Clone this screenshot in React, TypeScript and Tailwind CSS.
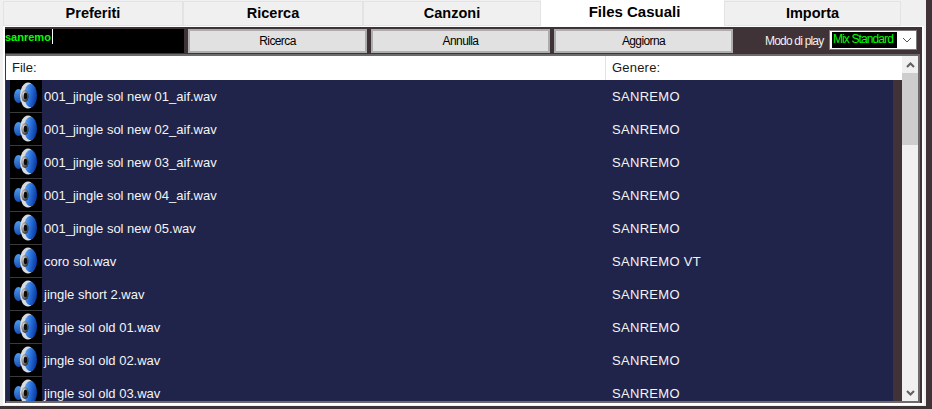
const FONT = "font-['Liberation_Sans',Arial,sans-serif]"

const tabs = [
  { label: 'Preferiti', width: 'w-[180px]' },
  { label: 'Ricerca', width: 'w-[180px]' },
  { label: 'Canzoni', width: 'w-[178px]' },
  { label: 'Files Casuali', width: 'w-[183px]', active: true },
  { label: 'Importa', width: 'w-[177px]' },
]

const rows = [
  ['001_jingle sol new 01_aif.wav', 'SANREMO'],
  ['001_jingle sol new 02_aif.wav', 'SANREMO'],
  ['001_jingle sol new 03_aif.wav', 'SANREMO'],
  ['001_jingle sol new 04_aif.wav', 'SANREMO'],
  ['001_jingle sol new 05.wav', 'SANREMO'],
  ['coro sol.wav', 'SANREMO VT'],
  ['jingle short 2.wav', 'SANREMO'],
  ['jingle sol old 01.wav', 'SANREMO'],
  ['jingle sol old 02.wav', 'SANREMO'],
  ['jingle sol old 03.wav', 'SANREMO'],
]

function SpeakerIcon() {
  return (
    <div className="w-[32px] h-[32px] bg-black shrink-0">
      <svg width="32" height="32" viewBox="0 0 32 32">
        <defs>
          <linearGradient id="cone" x1="0" y1="0" x2="1" y2="0.3">
            <stop offset="0" stopColor="#6db0f5" />
            <stop offset="0.55" stopColor="#2a72dc" />
            <stop offset="1" stopColor="#0c3fa8" />
          </linearGradient>
          <linearGradient id="back" x1="0" y1="0" x2="0" y2="1">
            <stop offset="0" stopColor="#4f9cf0" />
            <stop offset="1" stopColor="#174fb4" />
          </linearGradient>
          <radialGradient id="cap" cx="0.35" cy="0.35" r="0.75">
            <stop offset="0" stopColor="#e8e8e8" />
            <stop offset="0.6" stopColor="#6f6f6f" />
            <stop offset="1" stopColor="#1c1c1c" />
          </radialGradient>
        </defs>
        <ellipse cx="8.5" cy="16" rx="4.5" ry="7" fill="url(#back)" />
        <ellipse cx="18" cy="15.5" rx="8" ry="13" fill="#d8dbe0" />
        <ellipse cx="20.5" cy="15.5" rx="6.5" ry="11.5" fill="url(#cone)" />
        <ellipse cx="15" cy="16" rx="3.6" ry="6" fill="url(#cap)" />
        <ellipse cx="15.5" cy="16" rx="1.8" ry="3.2" fill="#0c0c0c" />
      </svg>
    </div>
  )
}

export default function App() {
  return (
    <div className={`${FONT} w-[932px] h-[409px] overflow-hidden bg-[#3f3338] flex flex-col`}>
      <div className="h-[406px] w-[926px] bg-[#f0f0f0] shrink-0 flex flex-col">
        {/* tabs */}
        <div className="h-[26px] pl-[3px] pt-[1px] flex shrink-0">
          {tabs.map((t) => (
            <div
              key={t.label}
              className={
                t.active
                  ? `${t.width} -mt-[1px] h-[26px] bg-white flex items-center justify-center pb-[2px] pl-[4px] text-[15px] font-bold text-black`
                  : `${t.width} h-[25px] bg-[#f0f0f0] border border-[#e3e3e3] flex items-center justify-center pt-[1px] text-[14.5px] font-bold text-black`
              }
            >
              {t.label}
            </div>
          ))}
        </div>

        {/* tab page */}
        <div className="flex-1 min-h-0 bg-white ml-[3px] mr-[2px] mb-[1px] pl-[2px] pr-[2px] pt-[1px] pb-[2px] flex flex-col">
          <div className="flex-1 min-h-0 bg-[#3f3338] flex flex-col">
            <div className="h-[27px] flex items-start pt-[2px] shrink-0">
              <div className="w-[179px] h-[24px] bg-black text-[#00ff00] text-[11px] font-bold flex items-start">
                sanremo
                <span className="w-[1px] h-[15px] bg-white ml-[1px]" />
              </div>
              <div className="flex gap-[4px] ml-[4px]">
                {['Ricerca', 'Annulla', 'Aggiorna'].map((b) => (
                  <button
                    key={b}
                    className="w-[179px] h-[24px] bg-[#e1e1e1] border-2 border-[#adadad] text-[12px] text-black tracking-[-0.6px]"
                  >
                    {b}
                  </button>
                ))}
              </div>
              <span className="ml-[32px] w-[64px] mt-[5px] text-[12px] leading-[14px] text-[#f0f0f0] tracking-[-0.8px] whitespace-nowrap">
                Modo di play
              </span>
              <div className="mt-[1px] w-[88px] h-[20px] bg-white border border-[#7a7a7a] flex items-center pl-[2px]">
                <div className="w-[65px] h-[16px] bg-black text-[#00ff00] text-[12px] leading-[15px] pl-[1px] tracking-[-0.9px] whitespace-nowrap shrink-0">
                  Mix Standard
                </div>
                <svg width="18" height="16" viewBox="0 0 18 16" fill="none" stroke="#555" strokeWidth="1" className="ml-[1px]">
                  <path d="M5 6 L9 10 L13 6" />
                </svg>
              </div>
            </div>

            {/* list */}
            <div className="flex-1 min-h-0 border-t-2 border-r-2 border-b-2 border-[#6d6a6c] flex overflow-hidden ml-[1px] mr-[2px]">
              <div className="flex-1 min-w-0 flex flex-col">
                <div className="h-[24px] bg-white flex shrink-0 text-[13px] text-[#1a1a1a]">
                  <div className="w-[600px] border-r border-[#e3e3e3] pl-[6px] flex items-center">File:</div>
                  <div className="flex-1 pl-[6px] flex items-center tracking-[0.2px]">Genere:</div>
                </div>
                <div className="flex-1 min-h-0 flex overflow-hidden">
                  <div className="flex-1 bg-[#20244b] pl-[4px] overflow-hidden">
                    {rows.map(([file, genre]) => (
                      <div key={file} className="h-[33px] flex text-[13px] text-[#f4f4f4] shrink-0">
                        <div className="w-[600px] flex items-start gap-[2px]">
                          <div className="border-b border-[#3a3a3a]">
                            <SpeakerIcon />
                          </div>
                          <span className="whitespace-nowrap h-[33px] pt-[1px] flex items-center">{file}</span>
                        </div>
                        <div className="flex-1 pl-[2px] h-[33px] pt-[1px] flex items-center tracking-[0.3px]">{genre}</div>
                      </div>
                    ))}
                  </div>
                  <div className="w-[9px] shrink-0 bg-[#3f3338]" />
                </div>
              </div>
              {/* scrollbar */}
              <div className="w-[16px] shrink-0 bg-[#f0f0f0] flex flex-col">
                <div className="h-[17px] flex items-center justify-center shrink-0">
                  <svg width="9" height="6" viewBox="0 0 9 6" fill="none" stroke="#606060" strokeWidth="2">
                    <path d="M1 5 L4.5 1.5 L8 5" />
                  </svg>
                </div>
                <div className="h-[72px] bg-[#cdcdcd] shrink-0" />
                <div className="flex-1" />
                <div className="h-[17px] flex items-center justify-center shrink-0">
                  <svg width="9" height="6" viewBox="0 0 9 6" fill="none" stroke="#606060" strokeWidth="2">
                    <path d="M1 1 L4.5 4.5 L8 1" />
                  </svg>
                </div>
              </div>
            </div>
          </div>
        </div>
      </div>
    </div>
  )
}
